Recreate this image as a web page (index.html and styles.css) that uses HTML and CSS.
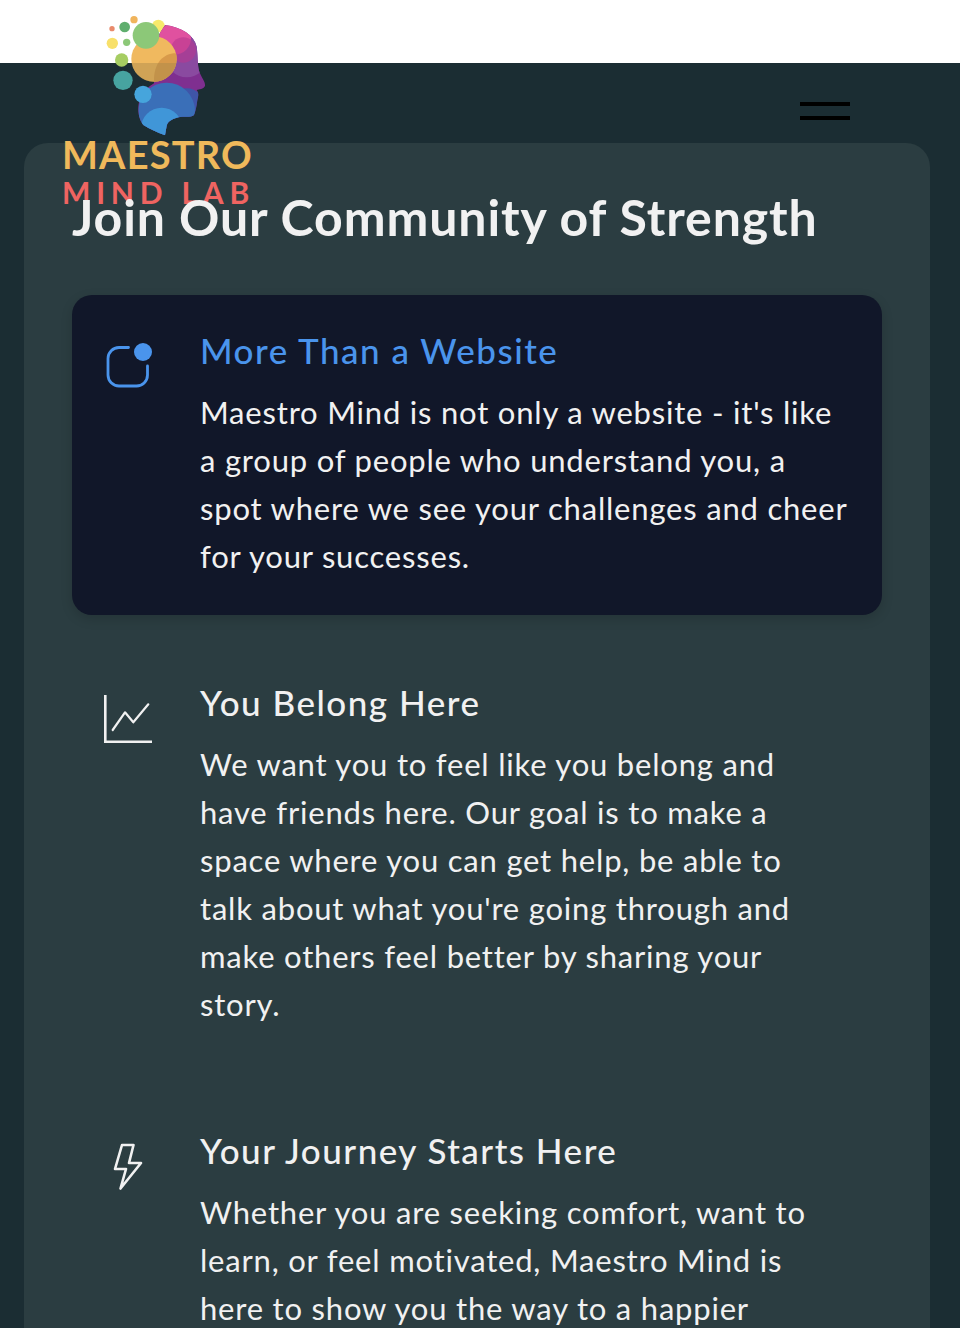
FILE: index.html
```html
<!DOCTYPE html>
<html><head><title>Maestro Mind Lab</title>
<meta charset="utf-8">
<link rel="stylesheet" href="styles.css">
</head>
<body>
<div id="logo">
	<svg class="logo-head" viewBox="180 30 330 390" width="110" height="130">
		<defs><clipPath id="headclip"><path d="M375 75C425 82 462 105 470 140C474 170 472 195 478 215C484 232 497 245 495 258C490 268 478 268 470 270C478 280 474 292 472 300C470 315 468 330 462 345C450 354 430 348 415 352C395 358 382 365 380 378L375 406C350 396 330 388 310 375C298 360 294 340 295 322C296 295 310 270 342 250L340 130Z"/></clipPath></defs>
		<circle cx="355" cy="78" r="19" fill="#f7e96b"/>
		<circle cx="282" cy="59" r="11" fill="#f0b45c"/>
		<circle cx="216" cy="86" r="8" fill="#e98a6b"/>
		<circle cx="254" cy="81" r="16" fill="#5fae6e"/>
		<circle cx="217" cy="130" r="17" fill="#f8e06a"/>
		<circle cx="260" cy="127" r="11" fill="#8cc878"/>
		<circle cx="245" cy="180" r="20" fill="#a6cd62"/>
		<circle cx="249" cy="241" r="29" fill="#47a3a0"/>
		<g clip-path="url(#headclip)">
			<rect x="290" y="70" width="210" height="340" fill="#7f2f90"/>
			<circle cx="440" cy="170" r="62" fill="#8a4aa0"/>
			<circle cx="405" cy="115" r="48" fill="#e0519f"/>
			<circle cx="430" cy="150" r="38" fill="#b8388f" opacity=".6"/>
			<circle cx="440" cy="320" r="55" fill="#3f55a8"/>
			<circle cx="380" cy="333" r="85" fill="#3a6fb8"/>
			<circle cx="365" cy="385" r="62" fill="#4096d8"/>
		</g>
		<circle cx="342" cy="177" r="68" fill="#f0b95f"/>
		<path d="M342 245A68 68 0 0 0 410 177C410 170 409 165 407 160C370 160 340 190 342 245Z" fill="#d89a4a"/>
		<path d="M275 189H409A68 68 0 0 1 275 189Z" fill="#a98a4c" opacity=".45"/>
		<circle cx="318" cy="106" r="40" fill="#8cc878"/>
		<circle cx="309" cy="283" r="26" fill="#46a5dc"/>
	</svg>
	<div class="logo-top">MAESTRO</div>
	<div class="logo-bottom">MIND LAB</div>
</div>

<div id="page">
	<div id="header">
		<div class="menu"><span></span><span></span></div>
	</div>
	<div id="panel">
		<h1>Join Our Community of Strength</h1>

		<div class="item active">
			<svg class="icon" viewBox="0 0 48 48" fill="none" stroke="#4a94ec" stroke-width="2.8" stroke-linecap="round">
				<path d="M24.5 4.5H15A11 11 0 0 0 4 15.5V32A11 11 0 0 0 15 43H32A11 11 0 0 0 43.5 32V23"/>
				<circle cx="39" cy="9" r="9" fill="#4a94ec" stroke="none"/>
			</svg>
			<div class="text">
				<h2>More Than a Website</h2>
				<p>Maestro Mind is not only a website - it's like<br>
				a group of people who understand you, a<br>
				spot where we see your challenges and cheer<br>
				for your successes.</p>
			</div>
		</div>

		<div class="item">
			<svg class="icon" viewBox="0 0 48 48" fill="none" stroke="#f1f1f1" stroke-width="2.6">
				<path d="M1.3 0V46.7H48"/>
				<path d="M8.7 35L21 17.3L29.3 27.3L44.3 9.3" stroke-width="2.2" stroke-linecap="round" stroke-linejoin="round"/>
			</svg>
			<div class="text">
				<h2>You Belong Here</h2>
				<p>We want you to feel like you belong and<br>
				have friends here. Our goal is to make a<br>
				space where you can get help, be able to<br>
				talk about what you're going through and<br>
				make others feel better by sharing your<br>
				story.</p>
			</div>
		</div>

		<div class="item">
			<svg class="icon" viewBox="0 0 48 48" fill="none" stroke="#f1f1f1" stroke-width="2.6" stroke-linejoin="round">
				<path d="M18 2H29.5L25 20H37L16.5 45.5L22 26H11Z"/>
			</svg>
			<div class="text">
				<h2>Your Journey Starts Here</h2>
				<p>Whether you are seeking comfort, want to<br>
				learn, or feel motivated, Maestro Mind is<br>
				here to show you the way to a happier</p>
			</div>
		</div>
	</div>
</div>
</body></html>
```

FILE: styles.css
```css
html, body { margin: 0; padding: 0; }
body {
	height: 1328px;
	overflow: hidden;
	position: relative;
	background-color: white;
	font-family: Lato, "Open Sans", sans-serif;
	color: #f1f1f1;
}
#logo {
	position: absolute;
	left: 62px;
	top: 10px;
	width: 200px;
	z-index: 1;
}
.logo-head {
	display: block;
	margin-left: 38px;
}
.logo-top, .logo-bottom {
	font-weight: 700;
	line-height: 1;
	white-space: nowrap;
}
.logo-top {
	color: #f0b95b;
	font-size: 38px;
	letter-spacing: 1.2px;
	margin-top: -5px;
}
.logo-bottom {
	color: #ef6461;
	font-size: 30px;
	letter-spacing: 5.8px;
	margin-top: 4px;
}
#page {
	margin-top: 63px;
	background-color: #1b2d33;
	padding: 0 30px 0 24px;
}
#header {
	height: 80px;
	box-sizing: border-box;
	display: flex;
	justify-content: flex-end;
	padding: 39px 80px 0 0;
}
.menu {
	display: flex;
	flex-direction: column;
	gap: 10px;
}
.menu span {
	display: block;
	width: 50px;
	height: 4px;
	background-color: black;
}
#panel {
	background-color: #2b3d41;
	border-radius: 24px 24px 0 0;
	padding: 46px 48px 100px;
}
h1 {
	position: relative;
	z-index: 2;
	margin: 0 0 50px;
	font-size: 50px;
	line-height: 56px;
	font-weight: 700;
	letter-spacing: 0.9px;
	color: #f1f1f1;
}
.item {
	display: flex;
	gap: 48px;
	padding: 32px 32px 35px;
	margin-bottom: 32px;
	border-radius: 20px;
}
.item.active {
	background-color: #111729;
	box-shadow: 0 4px 12px rgba(0,0,0,0.15);
}
.icon {
	flex: none;
	width: 48px;
	height: 48px;
	margin-top: 16px;
}
.text { white-space: nowrap; }
h2 {
	margin: 0 0 15px;
	font-size: 35px;
	line-height: 46px;
	font-weight: 500;
	letter-spacing: 1.5px;
}
.active h2 { color: #4a94ec; }
p {
	margin: 0;
	font-size: 31px;
	line-height: 48px;
	letter-spacing: 0.8px;
}
```
